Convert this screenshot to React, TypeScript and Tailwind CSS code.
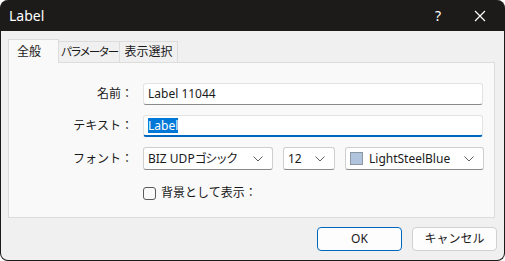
import { FunctionComponent } from "react";

const font = "font-['Noto_Sans','Noto_Sans_CJK_JP',sans-serif]";

const Chevron: FunctionComponent = () => (
    <svg width="10" height="6" viewBox="0 0 10 6" className="shrink-0">
        <path d="M0.5 0.5 L5 5 L9.5 0.5" fill="none" stroke="#5f5f5f" strokeWidth="1" />
    </svg>
);

interface ComboProps {
    width: string;
    text: string;
    kana?: string;
    swatch?: boolean;
}

const Combo: FunctionComponent<ComboProps> = ({ width, text, kana, swatch }) => (
    <div
        className={`${width} h-[23px] flex items-center justify-between pl-[4px] pr-[9px] bg-white border border-[#cfcfcf] border-b-[#8a8a8a] rounded-[3px]`}>
        <div className="flex items-center gap-[6px]">
            {swatch ? <div className="w-[13px] h-[13px] bg-[#b0c4de] border border-[#8d97a3]"></div> : <></>}
            <span className="text-[12px] text-[#1a1a1a] leading-none whitespace-nowrap">
                {text}
                {kana ? <span className="tracking-[-1.5px]">{kana}</span> : <></>}
            </span>
        </div>
        <Chevron />
    </div>
);

const App: FunctionComponent = () => {
    return (
        <div className={`w-[505px] h-[261px] bg-white ${font}`}>
            <div className="w-full h-full flex flex-col rounded-[8px] overflow-hidden bg-[#1c1b1a] border border-[#1c1b1a] border-t-0">
                <header className="h-[31px] shrink-0 flex items-center text-white">
                    <span className="pl-[8px] text-[14px] flex-1">Label</span>
                    <span className="text-[14px] w-[20px] text-center mr-[26px]">?</span>
                    <svg width="12" height="12" viewBox="0 0 12 12" className="mr-[18px]">
                        <path d="M1 1 L11 11 M11 1 L1 11" stroke="white" strokeWidth="1.2" />
                    </svg>
                </header>

                <div className="flex-1 flex flex-col bg-[#f0f0f0] pl-[7px] pr-[9px] pt-[7px]">
                    <div className="flex items-end h-[24px] text-[12px] text-[#1a1a1a] whitespace-nowrap">
                        <div className="w-[51px] h-[24px] pl-[8px] pt-[3px] bg-[#f9f9f9] border border-[#dcdcdc] border-b-0 relative z-10 -mb-[1px]">
                            全般
                        </div>
                        <div className="w-[61px] h-[21px] flex items-center justify-center border border-[#dcdcdc] border-l-0 border-b-0 bg-[#f0f0f0] text-[11.5px] tracking-[-2px]">
                            パラメーター
                        </div>
                        <div className="w-[58px] h-[21px] flex items-center justify-center border border-[#dcdcdc] border-l-0 border-b-0 bg-[#f0f0f0]">
                            表示選択
                        </div>
                    </div>

                    <div className="h-[156px] bg-[#f9f9f9] border border-[#dcdcdc] pt-[20px] flex flex-col text-[12px] text-[#1a1a1a]">
                        <div className="flex items-center h-[22px]">
                            <div className="w-[125px] text-right pr-[1px]">名前：</div>
                            <div className="ml-[9px] w-[340px] h-[22px] flex items-center px-[4px] bg-white border border-[#e3e3e3] border-b-[#8a8a8a] rounded-[3px]">
                                Label 11044
                            </div>
                        </div>

                        <div className="flex items-center h-[22px] mt-[10px]">
                            <div className="w-[125px] text-right pr-[1px]">テキスト：</div>
                            <div className="ml-[9px] w-[340px] h-[22px] flex items-center px-[4px] bg-white border border-[#e3e3e3] border-b-2 border-b-[#0067c0] rounded-[3px]">
                                <span className="bg-[#0078d7] text-white leading-[15px]">Label</span>
                            </div>
                        </div>

                        <div className="flex items-center h-[23px] mt-[10px]">
                            <div className="w-[125px] text-right pr-[1px]">フォント：</div>
                            <div className="ml-[9px] flex gap-[10px]">
                                <Combo width="w-[130px]" text="BIZ UDP" kana="ゴシック" />
                                <Combo width="w-[52px]" text="12" />
                                <Combo width="w-[139px]" text="LightSteelBlue" swatch />
                            </div>
                        </div>

                        <div className="flex items-center mt-[14px] ml-[134px]">
                            <div className="w-[13px] h-[13px] border border-[#5a5a5a] rounded-[3px] bg-[#f9f9f9]"></div>
                            <span className="ml-[5px]">背景として表示：</span>
                        </div>
                    </div>

                    <div className="flex justify-end gap-[10px] mt-[9px] text-[12px] text-[#1a1a1a]">
                        <button className="w-[85px] h-[24px] bg-[#fdfdfd] border border-[#0067c0] rounded-[4px]">OK</button>
                        <button className="w-[85px] h-[24px] bg-[#fdfdfd] border border-[#d0d0d0] rounded-[4px] -mr-[2px]">
                            キャンセル
                        </button>
                    </div>
                </div>
            </div>
        </div>
    );
};

export default App;
